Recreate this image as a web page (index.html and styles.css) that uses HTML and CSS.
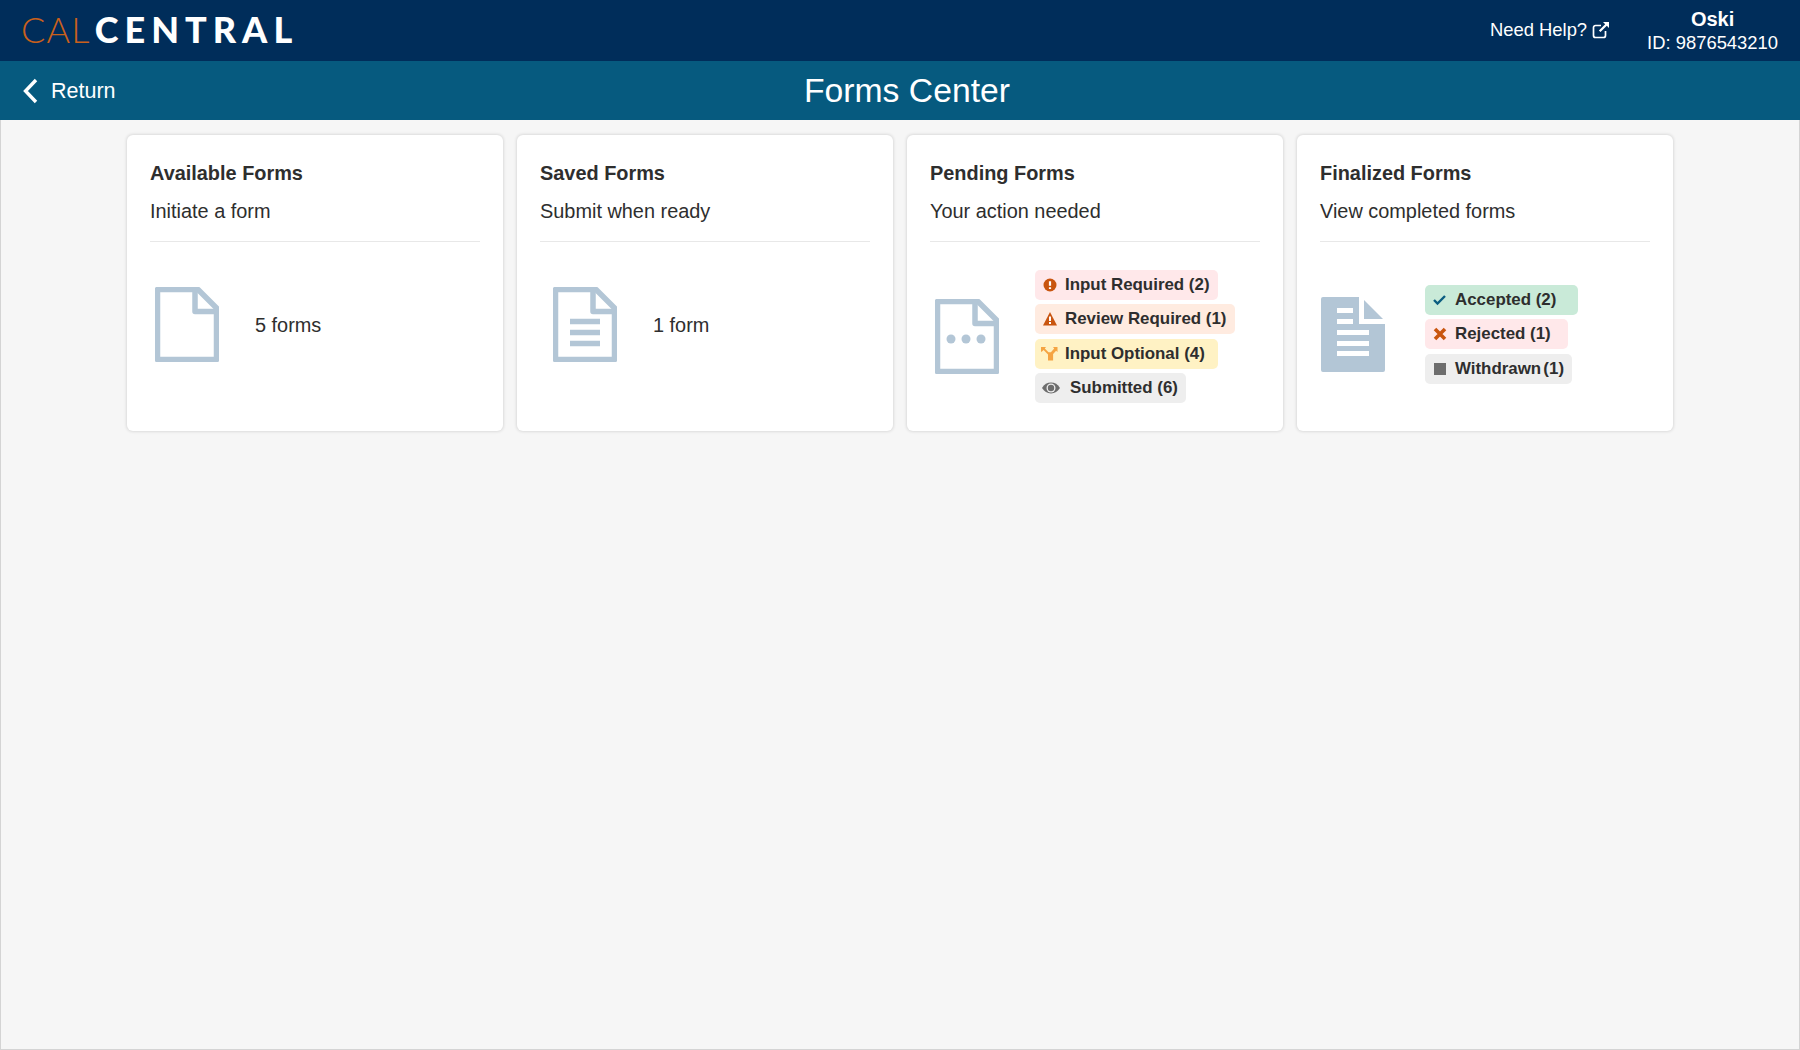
FILE: index.html
```html
<html>
<head>
    <title>Forms Center</title>
    <link rel="stylesheet" href="styles.css">
</head>
<body>
    <header class="topbar">
        <div class="logo"><span class="logo-cal">CAL</span><span class="logo-central">CENTRAL</span></div>
        <div class="help">
            Need Help?
            <svg class="help-icon" viewBox="0 0 18 18" width="18" height="18">
                <path d="M13.500 10v4.500a2 2 0 0 1-2 2H3.500a2 2 0 0 1-2-2V6.500a2 2 0 0 1 2-2H9" fill="none" stroke="#fff" stroke-width="1.700"/>
                <path d="M11 1h6v6l-2.200-2.200-6.300 6.300-1.600-1.600 6.300-6.300z" fill="#fff"/>
            </svg>
        </div>
        <div class="user">
            <div class="user-name">Oski</div>
            <div>ID: 9876543210</div>
        </div>
    </header>
    <nav class="subbar">
        <a class="return">
            <svg viewBox="0 0 16 26" width="16" height="26">
                <path d="M14 2 3.500 13 14 24" fill="none" stroke="#fff" stroke-width="3.400"/>
            </svg>
            Return
        </a>
        <h1 class="page-title">Forms Center</h1>
    </nav>
    <main class="content">
        <section class="card">
            <h2>Available Forms</h2>
            <p class="card-sub">Initiate a form</p>
            <div class="card-body body-plain">
                <svg class="doc" viewBox="0 0 64 75" width="64" height="75">
                    <path class="doc-line" d="M2.500 2.500H43L61.500 21v51.500H2.500z"/>
                    <path class="doc-line" d="M40 2.500v22h21.500"/>
                </svg>
                <div class="count">5 forms</div>
            </div>
        </section>
        <section class="card">
            <h2>Saved Forms</h2>
            <p class="card-sub">Submit when ready</p>
            <div class="card-body body-plain">
                <svg class="doc doc-saved" viewBox="0 0 64 75" width="64" height="75">
                    <path class="doc-line" d="M2.500 2.500H43L61.500 21v51.500H2.500z"/>
                    <path class="doc-line" d="M40 2.500v22h21.500"/>
                    <path class="doc-line" d="M17 34.500h30M17 45.500h30M17 56.500h30"/>
                </svg>
                <div class="count">1 form</div>
            </div>
        </section>
        <section class="card">
            <h2>Pending Forms</h2>
            <p class="card-sub">Your action needed</p>
            <div class="card-body body-pending">
                <svg class="doc" viewBox="0 0 64 75" width="64" height="75">
                    <path class="doc-line" d="M2.500 2.500H43L61.500 21v51.500H2.500z"/>
                    <path class="doc-line" d="M40 2.500v22h21.500"/>
                    <circle class="doc-dot" cx="16" cy="40" r="4.500"/>
                    <circle class="doc-dot" cx="31" cy="40" r="4.500"/>
                    <circle class="doc-dot" cx="46" cy="40" r="4.500"/>
                </svg>
                <ul class="badges">
                    <li class="badge pink pad-9">
                        <svg viewBox="0 0 18 18" width="18" height="18"><circle cx="10" cy="9" r="6.500" fill="#c9550f"/><path d="M10 5.200v4.600M10 11.300v1.700" stroke="#fff" stroke-width="2.200"/></svg>
                        Input Required (2)
                    </li>
                    <li class="badge peach pad-10">
                        <svg viewBox="0 0 18 18" width="18" height="18"><path d="M10 2 17 15.500H3z" fill="#c9550f"/><path d="M10 6.500v4.500M10 12v2" stroke="#fff" stroke-width="2"/></svg>
                        Review Required (1)
                    </li>
                    <li class="badge yellow pad-14">
                        <svg viewBox="0 0 18 18" width="18" height="18"><path d="M1 2h5L4.800 3.500 8.500 7.200h2.400l3.300-3.700L13 2h4.500v5l-1.400-1.300-3 3.300V15.500H8V9.500L3.600 5 2.300 6.300 1 7z" fill="#f5a442"/></svg>
                        Input Optional (4)
                    </li>
                    <li class="badge grey pad-8 wide-icon">
                        <svg viewBox="0 0 20 18" width="20" height="18"><path d="M1 9c2.200-3.600 5.200-5.400 9-5.400s6.800 1.800 9 5.400c-2.200 3.600-5.200 5.400-9 5.400s-6.800-1.800-9-5.400z" fill="#6d6d6d"/><circle cx="10" cy="9" r="4.500" fill="#eee"/><circle cx="10" cy="9" r="3.200" fill="#6d6d6d"/></svg>
                        Submitted (6)
                    </li>
                </ul>
            </div>
        </section>
        <section class="card">
            <h2>Finalized Forms</h2>
            <p class="card-sub">View completed forms</p>
            <div class="card-body body-final">
                <svg class="doc" viewBox="0 0 64 75" width="64" height="75">
                    <path class="doc-fill" d="M2 0h36v27h26v46a2 2 0 0 1-2 2H2a2 2 0 0 1-2-2V2a2 2 0 0 1 2-2z"/>
                    <path class="doc-fill" d="M43 3l19 19H43z"/>
                    <path class="doc-gap" d="M16 11h16v5H16zM16 22h16v5H16zM16 33h32v5H16zM16 44h32v5H16zM16 54h32v5H16z"/>
                </svg>
                <ul class="badges">
                    <li class="badge green pad-23">
                        <svg viewBox="0 0 18 18" width="18" height="18"><path d="M4 9l3.500 3.500L15 5" fill="none" stroke="#0b5d80" stroke-width="2.400"/></svg>
                        Accepted (2)
                    </li>
                    <li class="badge pink pad-17">
                        <svg viewBox="0 0 18 18" width="18" height="18"><path d="M5 4l10 10M15 4 5 14" stroke="#c9550f" stroke-width="3.600"/></svg>
                        Rejected (1)
                    </li>
                    <li class="badge grey pad-8 tight">
                        <svg viewBox="0 0 18 18" width="18" height="18"><path d="M4 3h12v12H4z" fill="#6d6d6d"/></svg>
                        Withdrawn (1)
                    </li>
                </ul>
            </div>
        </section>
    </main>
</body>
</html>
```

FILE: styles.css
```css
html, body {
    height: 100%;
}
body {
    margin: 0;
    display: flex;
    flex-direction: column;
    font-family: "Liberation Sans", Arial, sans-serif;
    color: #2e2e2e;
    background: #f6f6f6;
}
.topbar {
    height: 61px;
    flex: none;
    display: flex;
    align-items: center;
    padding: 0 22px 0 21px;
    background: #002d5a;
    color: #fff;
    font-size: 18.400px;
}
.logo {
    flex: 1;
    padding-bottom: 4px;
    font-family: Lato, sans-serif;
    font-size: 36px;
    line-height: 1;
    white-space: nowrap;
}
.logo-cal {
    font-weight: 300;
    letter-spacing: 1.200px;
    color: #c9601c;
}
.logo-central {
    margin-left: 4px;
    font-weight: 900;
    letter-spacing: 6px;
}
.help {
    display: flex;
    align-items: center;
    gap: 5px;
    margin: 0 37px 1px 1px;
}
.user {
    text-align: center;
    line-height: 23px;
}
.user-name {
    font-size: 20px;
    font-weight: bold;
}
.subbar {
    height: 59px;
    flex: none;
    display: grid;
    grid-template-columns: 1fr auto 1fr;
    align-items: center;
    padding: 0 22px 0 22px;
    background: #065a7f;
    color: #fff;
}
.return {
    display: flex;
    align-items: center;
    gap: 13px;
    padding-top: 1px;
    font-size: 21.500px;
}
.page-title {
    margin: 0 0 0 14px;
    font-size: 33.700px;
    font-weight: normal;
}
.content {
    flex: 1;
    display: grid;
    grid-template-columns: repeat(4, 376px);
    grid-template-rows: 296px;
    gap: 14px;
    padding: 15px 0 0 126px;
    border: 1px solid #d4d4d4;
    border-top: none;
    box-sizing: border-box;
}
.card {
    padding: 0 23px;
    background: #fff;
    border-radius: 6px;
    box-shadow: 0 0 3px 1px rgba(0, 0, 0, 0.11);
}
.card h2 {
    margin: 26px 0 0;
    font-size: 19.900px;
    line-height: 24px;
}
.card-sub {
    margin: 15px 0 0;
    padding-bottom: 18px;
    border-bottom: 1px solid #e8e8e8;
    font-size: 19.900px;
    line-height: 23px;
}
.card-body {
    display: flex;
    align-items: flex-start;
}
.body-plain {
    padding-top: 45px;
}
.body-pending {
    padding-top: 28px;
    align-items: center;
}
.body-final {
    padding-top: 43px;
    align-items: center;
}
.doc {
    flex: none;
    margin-left: 5px;
}
.doc-saved {
    margin-left: 13px;
}
.body-final .doc {
    margin-left: 1px;
}
.doc-line {
    fill: none;
    stroke: #b3c6d6;
    stroke-width: 5.500;
    stroke-linejoin: round;
}
.doc-dot, .doc-fill {
    fill: #b3c6d6;
}
.doc-gap {
    fill: #fff;
}
.count {
    margin: 26px 0 0 36px;
    font-size: 19.900px;
    line-height: 24px;
}
.badges {
    margin: 0 0 0 36px;
    padding: 0;
    list-style: none;
    display: flex;
    flex-direction: column;
    align-items: flex-start;
    gap: 4.300px;
}
.body-final .badges {
    margin-left: 40px;
}
.badge {
    height: 30px;
    display: flex;
    align-items: center;
    gap: 7px;
    padding-left: 5px;
    border-radius: 5px;
    font-size: 16.900px;
    font-weight: bold;
    white-space: nowrap;
}
.wide-icon {
    gap: 9px;
    padding-left: 6px;
}
.tight {
    word-spacing: -2.500px;
}
.pink { background: #ffe8ea; }
.peach { background: #ffebe0; }
.yellow { background: #fff2c4; }
.grey { background: #eeeeee; }
.green { background: #c9ead8; }
.pad-8 { padding-right: 8px; }
.pad-9 { padding-right: 8px; }
.pad-10 { padding-right: 9px; }
.pad-14 { padding-right: 13px; }
.pad-17 { padding-right: 17px; }
.pad-23 { padding-right: 22px; }
```
